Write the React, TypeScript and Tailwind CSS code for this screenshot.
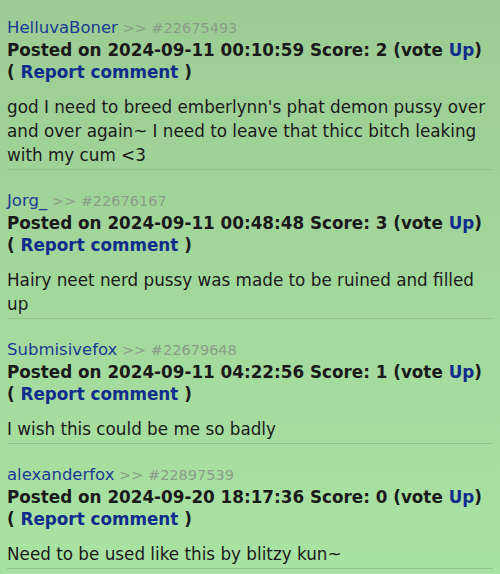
const comments = [
  {
    user: 'HelluvaBoner',
    id: '22675493',
    date: '2024-09-11 00:10:59',
    score: 2,
    body: "god I need to breed emberlynn's phat demon pussy over and over again~ I need to leave that thicc bitch leaking with my cum <3",
  },
  {
    user: 'Jorg_',
    id: '22676167',
    date: '2024-09-11 00:48:48',
    score: 3,
    body: 'Hairy neet nerd pussy was made to be ruined and filled up',
  },
  {
    user: 'Submisivefox',
    id: '22679648',
    date: '2024-09-11 04:22:56',
    score: 1,
    body: 'I wish this could be me so badly',
  },
  {
    user: 'alexanderfox',
    id: '22897539',
    date: '2024-09-20 18:17:36',
    score: 0,
    body: 'Need to be used like this by blitzy kun~',
  },
]

export default function App() {
  return (
    <div
      className="w-[500px] h-[574px] overflow-hidden bg-gradient-to-b from-[#9ccc94] to-[#a9e3a3] px-[7px] pt-[17px] text-[#1a1a1a]"
      style={{ fontFamily: '"DejaVu Sans", Verdana, sans-serif' }}
    >
      {comments.map((c) => (
        <div key={c.id} className="border-b border-[#93c48c] pb-[2px] mb-[20px]">
          <div className="text-[16.5px] leading-[22px]">
            <a className="text-[#1b3a93]">{c.user}</a>
            <span className="text-[#8c9c8a] text-[14.5px]"> &gt;&gt; #{c.id}</span>
          </div>
          <div className="text-[16.8px] leading-[22px] font-bold">
            Posted on {c.date} Score: {c.score} (vote <a className="text-[#102c8c]">Up</a>)
          </div>
          <div className="text-[16.8px] leading-[22px] font-bold">
            ( <a className="text-[#102c8c]">Report comment</a> )
          </div>
          <p className="mt-[12px] text-[16.8px] leading-[24px]">{c.body}</p>
        </div>
      ))}
    </div>
  )
}
